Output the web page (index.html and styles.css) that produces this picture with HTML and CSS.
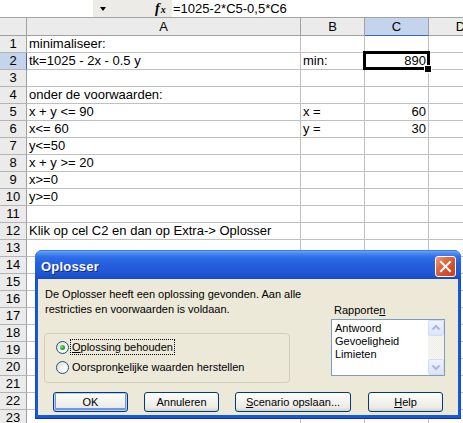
FILE: index.html
```html
<!DOCTYPE html>
<html>
<head>
<meta charset="utf-8">
<title>Oplosser</title>
<link rel="stylesheet" href="styles.css">
</head>
<body>
<div class="app">
  <div class="fbar">
    <div class="namebox"></div>
    <div class="nbbtn"><span class="tri"></span></div>
    <div class="fxgap"></div>
    <div class="fxbox"><span class="fx-f">f</span><span class="fx-x">x</span></div>
    <div class="formula">=1025-2*C5-0,5*C6</div>
  </div>
  <div class="sheet">
    <div class="row hdr"><div class="corner"></div><div class="ch">A</div><div class="ch">B</div><div class="ch sel">C</div><div class="ch">D</div></div>
    <div class="row"><div class="rh">1</div><div class="c">minimaliseer:</div><div class="c"></div><div class="c"></div><div class="c"></div></div>
    <div class="row"><div class="rh sel">2</div><div class="c">tk=1025 - 2x - 0.5 y</div><div class="c">min:</div><div class="c num active">890</div><div class="c"></div></div>
    <div class="row"><div class="rh">3</div><div class="c"></div><div class="c"></div><div class="c"></div><div class="c"></div></div>
    <div class="row"><div class="rh">4</div><div class="c">onder de voorwaarden:</div><div class="c"></div><div class="c"></div><div class="c"></div></div>
    <div class="row"><div class="rh">5</div><div class="c">x + y &lt;= 90</div><div class="c">x =</div><div class="c num">60</div><div class="c"></div></div>
    <div class="row"><div class="rh">6</div><div class="c">x&lt;= 60</div><div class="c">y =</div><div class="c num">30</div><div class="c"></div></div>
    <div class="row"><div class="rh">7</div><div class="c">y&lt;=50</div><div class="c"></div><div class="c"></div><div class="c"></div></div>
    <div class="row"><div class="rh">8</div><div class="c">x + y &gt;= 20</div><div class="c"></div><div class="c"></div><div class="c"></div></div>
    <div class="row"><div class="rh">9</div><div class="c">x&gt;=0</div><div class="c"></div><div class="c"></div><div class="c"></div></div>
    <div class="row"><div class="rh">10</div><div class="c">y&gt;=0</div><div class="c"></div><div class="c"></div><div class="c"></div></div>
    <div class="row"><div class="rh">11</div><div class="c"></div><div class="c"></div><div class="c"></div><div class="c"></div></div>
    <div class="row"><div class="rh">12</div><div class="c">Klik op cel C2 en dan op Extra-&gt; Oplosser</div><div class="c"></div><div class="c"></div><div class="c"></div></div>
    <div class="row"><div class="rh">13</div><div class="c"></div><div class="c"></div><div class="c"></div><div class="c"></div></div>
    <div class="row"><div class="rh">14</div><div class="c"></div><div class="c"></div><div class="c"></div><div class="c"></div></div>
    <div class="row"><div class="rh">15</div><div class="c"></div><div class="c"></div><div class="c"></div><div class="c"></div></div>
    <div class="row"><div class="rh">16</div><div class="c"></div><div class="c"></div><div class="c"></div><div class="c"></div></div>
    <div class="row"><div class="rh">17</div><div class="c"></div><div class="c"></div><div class="c"></div><div class="c"></div></div>
    <div class="row"><div class="rh">18</div><div class="c"></div><div class="c"></div><div class="c"></div><div class="c"></div></div>
    <div class="row"><div class="rh">19</div><div class="c"></div><div class="c"></div><div class="c"></div><div class="c"></div></div>
    <div class="row"><div class="rh">20</div><div class="c"></div><div class="c"></div><div class="c"></div><div class="c"></div></div>
    <div class="row"><div class="rh">21</div><div class="c"></div><div class="c"></div><div class="c"></div><div class="c"></div></div>
    <div class="row"><div class="rh">22</div><div class="c"></div><div class="c"></div><div class="c"></div><div class="c"></div></div>
    <div class="row"><div class="rh">23</div><div class="c"></div><div class="c"></div><div class="c"></div><div class="c"></div></div>
  </div>

  <div class="dialog">
    <div class="titlebar">
      <span class="title">Oplosser</span>
      <span class="close"><svg width="19" height="19" viewBox="0 0 19 19"><path d="M5 5 L14 14 M14 5 L5 14" stroke="#fff" stroke-width="2" stroke-linecap="square"/></svg></span>
    </div>
    <div class="dbody">
      <div class="top">
        <div class="left">
          <p class="msg">De Oplosser heeft een oplossing gevonden. Aan alle<br>restricties en voorwaarden is voldaan.</p>
          <div class="group">
            <div class="rrow"><span class="rb on"></span><span class="focus"><u>O</u>plossing behouden</span></div>
            <div class="rrow"><span class="rb"></span><span class="rlabel">Oorspron<u>k</u>elijke waarden herstellen</span></div>
          </div>
        </div>
        <div class="right">
          <div class="lbl">Rapporte<u>n</u></div>
          <div class="listbox">
            <div class="items">
              <div>Antwoord</div>
              <div>Gevoeligheid</div>
              <div>Limieten</div>
            </div>
            <div class="sb">
              <span class="sbtn"><svg width="14" height="14" viewBox="0 0 14 14"><path d="M3.5 8.5 L7 5 L10.5 8.5" fill="none" stroke="#a8b8dc" stroke-width="2"/></svg></span>
              <span class="track"></span>
              <span class="sbtn"><svg width="14" height="14" viewBox="0 0 14 14"><path d="M3.5 5.5 L7 9 L10.5 5.5" fill="none" stroke="#a8b8dc" stroke-width="2"/></svg></span>
            </div>
          </div>
        </div>
      </div>
      <div class="buttons">
        <span class="btn def">OK</span>
        <span class="btn">Annuleren</span>
        <span class="btn wide"><u>S</u>cenario opslaan...</span>
        <span class="btn help"><u>H</u>elp</span>
      </div>
    </div>
  </div>
</div>
</body>
</html>
```

FILE: styles.css
```css
* { box-sizing: border-box; margin: 0; padding: 0; }
html, body { width: 463px; height: 423px; overflow: hidden; background: #fff; }
body { font-family: "Liberation Sans", Arial, sans-serif; color: #000; }
.app { position: relative; width: 463px; height: 423px; overflow: hidden; }

/* formula bar */
.fbar { display: flex; height: 18px; border-bottom: 1px solid #a3a3a3; background: #ecebe7; }
.namebox { width: 93px; background: #fff; }
.nbbtn { width: 19px; display: flex; align-items: center; justify-content: center; }
.tri { width: 1px; height: 0; border-left: 3px solid transparent; border-right: 3px solid transparent; border-top: 4px solid #000; }
.fxgap { width: 43px; }
.fxbox { width: 17px; display: flex; align-items: baseline; padding-top: 1px; font-family: "Liberation Serif", serif; font-style: italic; font-weight: bold; color: #000; }
.fx-f { font-size: 14px; line-height: 16px; }
.fx-x { font-size: 10px; line-height: 16px; margin-left: 1px; }
.formula { flex: 1; background: #fff; font-size: 13px; line-height: 17px; padding-left: 1px; white-space: nowrap; }

/* sheet */
.sheet { overflow: hidden; }
.row { display: grid; grid-template-columns: 27px 274px 64px 64px 64px; height: 17px; }
.row.hdr { height: 18px; }
.c { border-right: 1px solid #c0c0c0; border-bottom: 1px solid #c0c0c0; font-size: 13px; line-height: 16px; padding-left: 2px; white-space: nowrap; }
.c.num { text-align: right; padding-right: 2px; }
.corner, .ch, .rh { background: #ebebeb; border-right: 1px solid #a0a0a0; border-bottom: 1px solid #a0a0a0; font-size: 13px; text-align: center; line-height: 17px; }
.rh { line-height: 16px; border-bottom-color: #b4b4b4; }
.ch.sel { background: #c3d4ec; border-bottom: 1px solid #3f66b3; }
.rh.sel { background: #c3d4ec; border-right: 1px solid #3f66b3; }
.active { position: relative; }
.active::after { content: ""; position: absolute; left: -2px; top: -2px; right: -2px; bottom: -1px; border: 3px solid #000; }
.active::before { content: ""; position: absolute; right: -4px; bottom: -4px; width: 6px; height: 6px; background: #000; border: 1px solid #fff; z-index: 2; }

/* dialog */
.dialog { position: absolute; left: 35px; top: 250px; width: 426px; height: 169px; display: flex; flex-direction: column; padding: 0 3px 3px; background: linear-gradient(90deg, #0a3fc9, #1658dc 1px, #1658dc calc(100% - 1px), #0a3fc9); border-radius: 7px 7px 0 0; border-bottom: 1px solid #0633b8; }
.titlebar { height: 29px; margin: 0 -3px; padding: 4px 5px 0 6px; display: flex; align-items: center; justify-content: space-between; border-radius: 7px 7px 0 0; background: linear-gradient(180deg, #1c4fd5 0, #67a6f8 1px, #4c8ef2 3px, #2f70e8 7px, #2760de 13px, #225ad9 20px, #1d52cf 26px, #1848c4 29px); }
.title { color: #fff; font-weight: bold; font-size: 13px; text-shadow: 1px 1px 0 #0c2a8a; letter-spacing: 0.2px; }
.close { width: 21px; height: 21px; border: 1px solid #fff; border-radius: 3px; background: linear-gradient(135deg, #ec9b7d 0%, #e06b45 35%, #d2502a 65%, #c8431c 100%); display: flex; align-items: center; justify-content: center; }
.close svg { display: block; }
.dbody { flex: 1; background: #ece9d8; padding: 8px 0 0 6px; font-size: 11px; }
.top { display: grid; grid-template-columns: 287px 114px; }
.msg { line-height: 15px; padding-left: 1px; white-space: nowrap; }
.group { margin-top: 16px; width: 246px; height: 50px; border: 1px solid #d0d0bf; border-radius: 4px; padding: 5px 0 0 11px; display: flex; flex-direction: column; gap: 4px; }
.rrow { display: flex; align-items: center; height: 16px; }
.rb { width: 13px; height: 13px; border-radius: 50%; border: 1px solid #1c5180; background: linear-gradient(135deg, #dcdbd3 0%, #f4f3ee 50%, #ffffff 100%); margin-right: 3px; display: flex; align-items: center; justify-content: center; }
.rb.on::after { content: ""; width: 5px; height: 5px; border-radius: 50%; background: radial-gradient(circle at 35% 35%, #7ce07a, #21a121 60%, #0f7f0f); }
.focus { outline: 1px dotted #000; outline-offset: 0; padding: 0 1px; line-height: 14px; margin-left: -1px; }
.rlabel { line-height: 14px; }
.right { padding-top: 16px; }
.lbl { padding-left: 3px; line-height: 14px; }
.listbox { margin-top: 2px; height: 57px; border: 1px solid #7f9db9; background: #fff; display: flex; }
.items { flex: 1; padding: 2px 0 0 3px; line-height: 13px; }
.sb { width: 16px; display: flex; flex-direction: column; }
.sbtn { width: 16px; height: 16px; border: 1px solid #d2dcf5; border-radius: 2px; background: linear-gradient(180deg, #eef3fd, #dbe5fa); display: flex; align-items: center; justify-content: center; }
.track { flex: 1; background: repeating-conic-gradient(#f8f7f3 0 25%, #eeede6 0 50%) 0 0 / 2px 2px; }
.buttons { display: flex; gap: 16px; padding-left: 9px; margin-top: 9px; }
.btn { width: 75px; height: 20px; border: 1px solid #003c74; border-radius: 3px; background: linear-gradient(180deg, #ffffff 0%, #f5f4ef 40%, #ecebe5 80%, #d8d4ca 100%); font-size: 11px; line-height: 18px; text-align: center; white-space: nowrap; }
.btn.def { box-shadow: inset 0 0 0 1px #b8cff7, inset 0 -1px 0 2px #7196e2; }
.btn.wide { width: 116px; }
.btn.help { margin-left: 1px; }
```
